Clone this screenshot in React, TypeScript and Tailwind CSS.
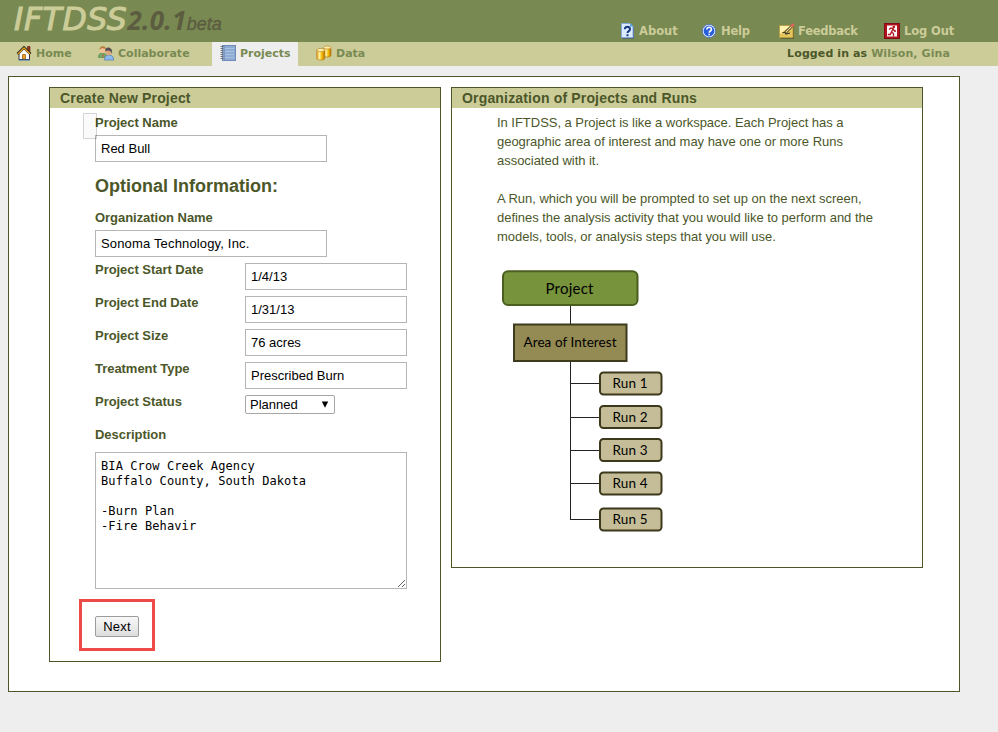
import type { ReactNode } from "react";

const HomeIcon = () => (
  <svg width="16" height="16" viewBox="0 0 16 16">
    <path d="M11.500 1.500h2.500v5l-2.500-2z" fill="#a03020" stroke="#5a1a10" strokeWidth=".6" />
    <path d="M3 8v6.500h10.500V8L8 3z" fill="#fafaff" stroke="#334" strokeWidth="1" />
    <path d="M1.500 9L8 2.500 14.500 9" fill="none" stroke="#222" strokeWidth="2.600" />
    <path d="M2 9L8 2.900 14 9" fill="none" stroke="#f2ab18" strokeWidth="1.300" />
    <path d="M6.500 9.500h3V14h-3z" fill="#e8a020" stroke="#965b0a" strokeWidth=".7" />
    <path d="M2.500 15h11.500" stroke="#3b6fb5" strokeWidth="1" />
  </svg>
);

const PeopleIcon = () => (
  <svg width="16" height="16" viewBox="0 0 16 16">
    <path d="M.5 12.500c0-3 1-4.500 4-4.500s4 2 4 4.500z" fill="#74aa67" stroke="#4e8445" strokeWidth=".6" />
    <circle cx="4.900" cy="5" r="3.100" fill="#f3c29b" />
    <path d="M1.500 5C1 .2 8.500-.2 8 4.500 6 2.500 3 2.700 1.500 5z" fill="#b67a3c" />
    <path d="M5 9l-1 3 2-1z" fill="#e84b45" />
    <path d="M6.500 15c0-3.500 1.500-5 4.500-5s4.700 2 4.700 5z" fill="#8dbbed" stroke="#5279b4" strokeWidth=".7" />
    <circle cx="10.600" cy="7.300" r="3" fill="#dda77c" />
    <path d="M7.200 6.500C6.500 .8 15.500 1 14 9 13.500 5.500 10 4.300 7.200 6.500z" fill="#514d50" />
  </svg>
);

const NotebookIcon = () => (
  <svg width="16" height="16" viewBox="0 0 16 16">
    <rect x="2.500" y=".5" width="13" height="15" fill="#8fabd3" stroke="#6f8cb8" />
    <path d="M5 3.500h9M5 6.500h9M5 9.500h9M5 12.500h9" stroke="#a9c2e4" />
    <path d="M4.500 1v14" stroke="#7c98c4" />
    <path d="M.5 1.500h3M.5 3.500h3M.5 5.500h3M.5 7.500h3M.5 9.500h3M.5 11.500h3M.5 13.500h3" stroke="#65676c" strokeWidth=".9" />
  </svg>
);

const DataIcon = () => (
  <svg width="16" height="16" viewBox="0 0 16 16">
    <defs>
      <linearGradient id="gold">
        <stop offset="0" stopColor="#e7a51d" />
        <stop offset=".35" stopColor="#fff1a0" />
        <stop offset=".65" stopColor="#f3b900" />
        <stop offset="1" stopColor="#b97305" />
      </linearGradient>
    </defs>
    <path d="M7.500 2.500v8c0 2 7.500 2 7.500 0v-8z" fill="url(#gold)" stroke="#ac7412" strokeWidth=".6" />
    <ellipse cx="11.250" cy="2.500" rx="3.750" ry="1.500" fill="#fff0b0" stroke="#b98022" strokeWidth=".6" />
    <path d="M.8 5v8.500c0 2 7.900 2 7.900 0V5z" fill="url(#gold)" stroke="#ac7412" strokeWidth=".6" />
    <ellipse cx="4.750" cy="5" rx="3.950" ry="1.600" fill="#fff0b0" stroke="#b98022" strokeWidth=".6" />
  </svg>
);

const AboutIcon = () => (
  <svg width="16" height="16" viewBox="0 0 16 16">
    <path d="M2 1.500h9.500L14 4.500v11H2z" fill="#34517e" />
    <path d="M1.500 .5h8.500l3 3v11H1.500z" fill="#dcecff" stroke="#86a9db" />
    <path d="M10 .5v3h3z" fill="#49a5ea" />
    <path d="M4.800 6.300c0-3.500 5.200-3.200 5.200 0 0 2-2.500 1.700-2.500 3.700M7.500 11.300v2" fill="none" stroke="#17387f" strokeWidth="2" />
  </svg>
);

const HelpIcon = () => (
  <svg width="16" height="16" viewBox="0 0 16 16">
    <circle cx="8" cy="8" r="6.700" fill="#e6efff" stroke="#4264a9" strokeWidth=".8" />
    <circle cx="8" cy="8" r="5.400" fill="#275fd8" />
    <path d="M5.800 6.500c0-3 4.600-2.800 4.600 0 0 1.600-2.200 1.400-2.200 3.200M8.200 10.800v1.500" fill="none" stroke="#fff" strokeWidth="1.600" />
  </svg>
);

const FeedbackIcon = () => (
  <svg width="16" height="16" viewBox="0 0 16 16">
    <path d="M1.500 3.500h13.500v12H1.500z" fill="#4c431c" />
    <path d="M.5 2.500h13.500v12H.5z" fill="#e3c55e" stroke="#baa044" />
    <path d="M1 3h10L1 11z" fill="#fff3b2" />
    <path d="M3.500 9.500h2.500l1 1.500 4-1" fill="none" stroke="#3a3725" strokeWidth="1.200" />
    <path d="M6 10L13 3" stroke="#3a3725" strokeWidth="2.600" />
    <path d="M6.700 9.300L13 3" stroke="#f5dc8b" strokeWidth="1.200" />
    <path d="M12.300 3.500L14.700 1.200" stroke="#df6259" strokeWidth="2.600" />
  </svg>
);

const LogOutIcon = () => (
  <svg width="16" height="16" viewBox="0 0 16 16">
    <rect x=".5" y=".5" width="15" height="15" fill="#b3121d" stroke="#7f1018" />
    <path d="M3 2.500h10v11H3z" fill="#fff" />
    <circle cx="9.800" cy="4" r="1.300" fill="#b3121d" />
    <path d="M5 6.500l2-1.500 2 .7-1.500 3.300 2 1.500v3M7.500 9L6.300 11.500H3.800M9 6l1.500 2H12" fill="none" stroke="#b3121d" strokeWidth="1.300" />
  </svg>
);

const topLinks = [
  { label: "About", icon: <AboutIcon />, box: "w-[81px] gap-[3px] tracking-[0px]" },
  { label: "Help", icon: <HelpIcon />, box: "w-[78px] gap-[4px] tracking-[-0.2px]" },
  { label: "Feedback", icon: <FeedbackIcon />, box: "w-[105px] gap-[3px] tracking-[-0.25px]" },
  { label: "Log Out", icon: <LogOutIcon />, box: "w-[114px] gap-[4px] tracking-[-0.1px]" },
];

const label = "block h-[19px] text-[13px] leading-[19px] font-bold tracking-[-0.04px] text-[#4b5729]";
const field = "block h-[27px] border border-[#b5b5b5] bg-white px-[5px] text-[13px] text-black outline-none";

function Panel({ title, className, children }: { title: string; className: string; children: ReactNode }) {
  return (
    <section className={`border border-[#4b5729] ${className}`}>
      <h2 className="h-5 bg-[#cccc99] pl-[10px] text-[14px] leading-5 font-bold tracking-[0.17px] text-[#4b5729]">{title}</h2>
      <div className="pl-[45px] pt-[5px]">{children}</div>
    </section>
  );
}

function Diagram() {
  const runs = [383.5, 417, 450, 483.5, 519.5];
  return (
    <svg className="block" width="172" height="270" viewBox="497 265 172 270" fontFamily="Lato, sans-serif" textAnchor="middle">
      <path d="M570.500 305V520M570 383.500h30M570 417.500h30M570 450.500h30M570 483.500h30M570 519.500h30" fill="none" stroke="#222" strokeWidth="1" />
      <rect x="503" y="271.200" width="134.500" height="33.800" rx="5" fill="#77933c" stroke="#4a5f20" strokeWidth="2" />
      <text x="569.500" y="293.500" fontSize="15" textLength="48">Project</text>
      <rect x="514" y="324.500" width="112.500" height="36.500" fill="#948a54" stroke="#3d3a1e" strokeWidth="2" />
      <text x="570" y="347" fontSize="13.500" textLength="93">Area of Interest</text>
      {runs.map((y, i) => (
        <g key={y}>
          <rect x="600" y={y - 11} width="61.5" height="22" rx="3.500" fill="#c4bd97" stroke="#3d391c" strokeWidth="2" />
          <text x="630" y={y + 4.5} fontSize="13.500" textLength="35">{`Run ${i + 1}`}</text>
        </g>
      ))}
    </svg>
  );
}

export default function App() {
  const rows = [
    ["Project Start Date", "1/4/13"],
    ["Project End Date", "1/31/13"],
    ["Project Size", "76 acres"],
    ["Treatment Type", "Prescribed Burn"],
  ];
  return (
    <div className="h-[732px] w-[998px] overflow-hidden bg-[#eeeeee] font-['Liberation_Sans',Arial,sans-serif]">
      <header className="flex h-[42px] justify-between bg-[#788a52]">
        <div className="flex items-baseline pl-[14px] whitespace-nowrap italic leading-[38px]">
          <span className="font-['DejaVu_Sans',Verdana,sans-serif] text-[31.5px] tracking-[0.6px] text-[#cccc99] [-webkit-text-stroke:1px_#cccc99]">IFTDSS</span>
          <span className="font-['Open_Sans',sans-serif] text-[26px] font-bold tracking-[0.3px] text-[#5c5c40]">2.0.1</span>
          <span className="text-[18px] text-[#5c5c40] [-webkit-text-stroke:0.4px_#5c5c40]">beta</span>
        </div>
        <nav className="flex pt-[23px] font-['DejaVu_Sans',Verdana,sans-serif] text-[11.5px] leading-4 font-bold text-[#cccc99]">
          {topLinks.map((l) => (
            <a key={l.label} className={`flex whitespace-nowrap ${l.box}`}>
              {l.icon}
              {l.label}
            </a>
          ))}
        </nav>
      </header>
      <div className="flex h-6 bg-[#cccc99] font-['DejaVu_Sans',Verdana,sans-serif] text-[11px] leading-[23px] font-bold text-[#788a52]">
        <a className="flex w-[82px] gap-1 pl-4"><span className="pt-[3px]"><HomeIcon /></span>Home</a>
        <a className="flex w-[130px] gap-1 pl-4"><span className="pt-[3px]"><PeopleIcon /></span>Collaborate</a>
        <a className="flex w-[86px] gap-1 bg-[#eeeeee] pl-2"><span className="pt-[3px]"><NotebookIcon /></span>Projects</a>
        <a className="flex gap-1 pl-[18px]"><span className="pt-[3px]"><DataIcon /></span>Data</a>
        <div className="ml-auto pr-[48px] tracking-[0.1px] text-[#4b5729]">Logged in as <span className="text-[#788a52]">Wilson, Gina</span></div>
      </div>
      <main className="mt-[10px] ml-2 flex h-[616px] w-[952px] items-start gap-[10px] border border-[#4b5729] bg-white pt-[10px] pl-10">
        <Panel title="Create New Project" className="h-[575px] w-[392px]">
          <div className="relative">
            <div className="absolute -left-3 top-0 h-[26px] w-[14px] border border-black/15 bg-black/2" />
            <label className={label}>Project Name</label>
          </div>
          <input className={`${field} mt-[3px] w-[232px]`} defaultValue="Red Bull" />
          <h3 className="mt-3 h-6 text-[18px] leading-6 font-bold text-[#4b5729]">Optional Information:</h3>
          <label className={`${label} mt-[10px]`}>Organization Name</label>
          <input className={`${field} mt-[3px] w-[232px] tracking-[0.16px]`} defaultValue="Sonoma Technology, Inc." />
          <div className="mt-[3px]">
            {rows.map(([name, value]) => (
              <div key={name} className="flex h-[33px] items-start">
                <label className={`${label} w-[150px]`}>{name}</label>
                <input className={`${field} mt-[3px] w-[162px]`} defaultValue={value} />
              </div>
            ))}
            <div className="flex h-[33px] items-start">
              <label className={`${label} w-[150px]`}>Project Status</label>
              <div className="mt-[3px] flex h-[19px] w-[90px] items-center justify-between rounded-[2px] border border-[#a6a6a6] pr-[5px] pl-1 text-[13px] text-black">
                <span>Planned</span>
                <svg width="8" height="8" viewBox="0 0 8 8"><path d="M.8 .5h6.400L4 6.800z" /></svg>
              </div>
            </div>
          </div>
          <label className={label}>Description</label>
          <textarea
            className="mt-2 block h-[137px] w-[312px] resize border border-[#b5b5b5] px-[5px] py-[6px] font-['DejaVu_Sans_Mono',monospace] text-[12px] leading-[15px] tracking-[0.1px] text-black"
            defaultValue={"BIA Crow Creek Agency\nBuffalo County, South Dakota\n\n-Burn Plan\n-Fire Behavir"}
          />
          <div className="mt-[10px] -ml-4 h-[52px] w-[76px] border-3 border-[#ec4b47] pt-[14px] pl-[13px]">
            <button className="block h-[21px] w-[44px] rounded-[2px] border border-[#9c9c9c] bg-linear-to-b from-[#f8f8f8] to-[#dddddd] text-[13px] leading-[19px] tracking-[0.2px] text-black">Next</button>
          </div>
        </Panel>
        <Panel title="Organization of Projects and Runs" className="h-[481px] w-[472px]">
          <div className="text-[13px] leading-[19px] tracking-[-0.03px] whitespace-nowrap text-[#4b5729]">
            <p>In IFTDSS, a Project is like a workspace. Each Project has a<br />geographic area of interest and may have one or more Runs<br />associated with it.</p>
            <p className="mt-[19px]">A Run, which you will be prompted to set up on the next screen,<br />defines the analysis activity that you would like to perform and the<br />models, tools, or analysis steps that you will use.</p>
          </div>
          <div className="mt-[19px]"><Diagram /></div>
        </Panel>
      </main>
    </div>
  );
}
